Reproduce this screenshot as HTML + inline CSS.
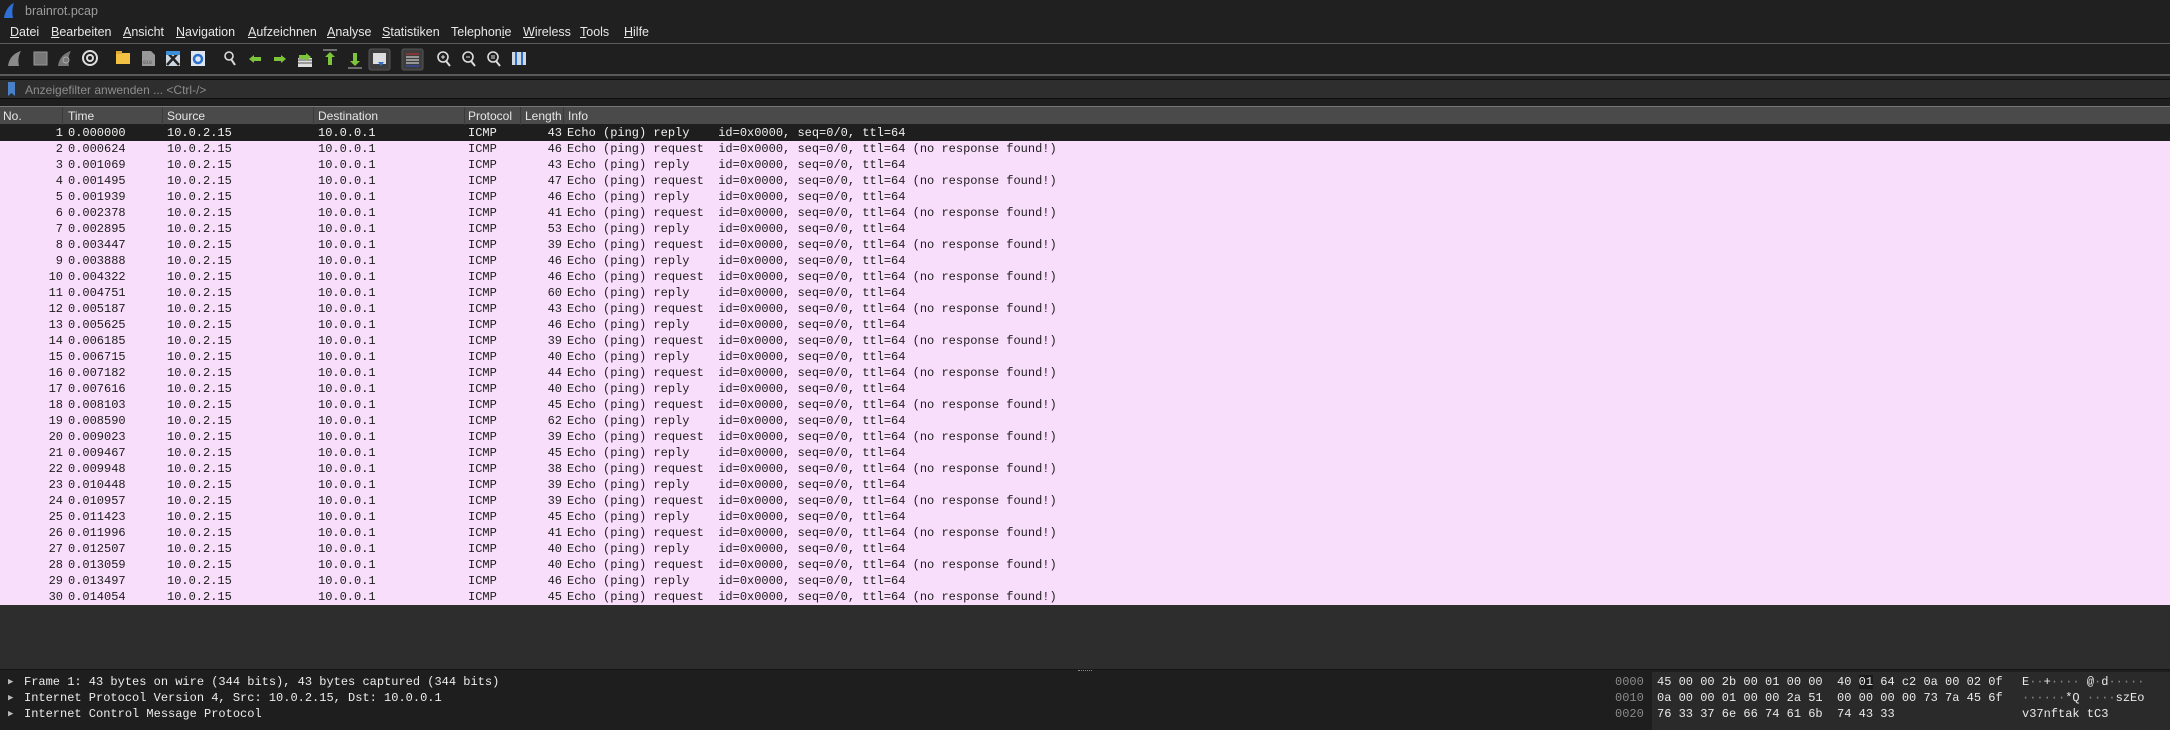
<!DOCTYPE html>
<html><head><meta charset="utf-8"><style>
*{margin:0;padding:0;box-sizing:border-box}
body{width:2170px;height:730px;background:#1e1e1e;position:relative;overflow:hidden;font-family:"Liberation Sans",sans-serif;}
.abs{position:absolute}
#title{left:0;top:0;width:2170px;height:22px;background:#202020;color:#9c9c9c;font-size:12.5px}
#menu{left:0;top:22px;width:2170px;height:22px;background:#202020;color:#e8e8e8;font-size:12.5px;border-bottom:1px solid #5e5e5e}
#menu span{position:absolute;top:3px}
#menu u{text-decoration:underline}
#tool{left:0;top:45px;width:2170px;height:31px;background:#1f1f1f;border-bottom:2px solid #5a5a5a}
#filter{left:0;top:79px;width:2170px;height:20px;background:#2e2e2e;border-top:1px solid #0e0e0e;border-bottom:1px solid #0e0e0e}
#hdr{left:0;top:106px;width:2170px;height:18px;background:#4a4a4a;color:#e6e6e6;font-size:12px;border-top:1px solid #777}
#hdr span{position:absolute;top:2px}
#hdr i{position:absolute;top:0;width:1px;height:18px;background:#3a3a3a}
.r{position:absolute;left:0;width:2170px;height:16px;background:#f9defc;color:#1c1c1c;font-family:"Liberation Mono",monospace;font-size:12px;line-height:16px;white-space:pre}
.r.s{background:#1e1e1e;color:#f0f0f0}
.r span{position:absolute;top:0}
.n{left:0;width:63px;text-align:right}
.t{left:68px}.sr{left:167px}.d{left:318px}.p{left:468px}
.l{left:520px;width:42px;text-align:right}
.i{left:567px}
#empty{left:0;top:605px;width:2170px;height:65px;background:#2d2d2d;border-bottom:1px solid #161616}
#det{left:0;top:672px;width:1604px;height:58px;background:#1e1e1e;color:#ececec;font-family:"Liberation Mono",monospace;font-size:12px;line-height:16px;white-space:pre}
#hex{left:1608px;top:672px;width:562px;height:58px;background:#2a2a2a;color:#eaeaea;font-family:"Liberation Mono",monospace;font-size:12px;line-height:16px;white-space:pre}
</style></head><body>
<div id="title" class="abs">
<svg class="abs" style="left:3px;top:2px" width="12" height="17" viewBox="0 0 12 17"><path d="M1 16 C2 9 6 3 11 1 C9 6 9 11 10 16 Z" fill="#2f6fd6"/></svg>
<span class="abs" style="left:25px;top:4px">brainrot.pcap</span></div>
<div id="menu" class="abs">
<span style="left:10px"><u>D</u>atei</span><span style="left:51px"><u>B</u>earbeiten</span><span style="left:123px"><u>A</u>nsicht</span><span style="left:176px"><u>N</u>avigation</span><span style="left:248px"><u>A</u>ufzeichnen</span><span style="left:327px"><u>A</u>nalyse</span><span style="left:382px"><u>S</u>tatistiken</span><span style="left:451px">Telephon<u>i</u>e</span><span style="left:523px"><u>W</u>ireless</span><span style="left:580px"><u>T</u>ools</span><span style="left:624px"><u>H</u>ilfe</span>
</div>
<div id="tool" class="abs">
<svg width="560" height="31" viewBox="0 0 560 31">
<path d="M8 21 C9 13 14 8 21 6 C18 11 18 16 19 21Z" fill="#8a8a8a"/>
<rect x="34" y="7" width="13" height="13" fill="#777" stroke="#999"/>
<path d="M58 21 C59 13 64 8 71 6 C68 11 68 16 69 21Z" fill="#777"/><circle cx="66" cy="15" r="3" fill="none" stroke="#aaa"/>
<circle cx="90" cy="13" r="7" fill="none" stroke="#ddd" stroke-width="2"/><circle cx="90" cy="13" r="3" fill="none" stroke="#ddd" stroke-width="2"/>
<rect x="116" y="8" width="14" height="11" fill="#f2c042"/><rect x="116" y="6" width="6" height="3" fill="#e0a830"/>
<path d="M142 6h9l4 4v11h-13z" fill="#999"/><text x="143" y="19" font-size="5" fill="#555" font-family="Liberation Mono">010</text>
<rect x="166" y="6" width="14" height="15" fill="#cfd8e0"/><path d="M167 7l12 13M179 7l-12 13" stroke="#222" stroke-width="2.5"/><rect x="166" y="6" width="14" height="4" fill="#3a8fd8"/>
<rect x="191" y="6" width="14" height="15" fill="#dde6ee"/><circle cx="198" cy="14" r="4" fill="none" stroke="#2a6fd0" stroke-width="2.5"/>
<circle cx="229" cy="11" r="4" fill="none" stroke="#ddd" stroke-width="1.6"/><path d="M231 14l4 6" stroke="#ddd" stroke-width="2"/>
<path d="M249 14l5-4v2h7v4h-7v2z" fill="#7cc43a"/>
<path d="M286 14l-5-4v2h-7v4h7v2z" fill="#7cc43a"/>
<rect x="298" y="13" width="14" height="9" fill="#ddd"/><path d="M298 15h14M298 18h14" stroke="#555"/><path d="M299 10h7v-2l5 4-5 4v-2h-7z" fill="#7cc43a"/>
<path d="M323 5h14" stroke="#bbb"/><path d="M330 7l-5 5h3v8h4v-8h3z" fill="#7cc43a"/>
<path d="M348 23h14" stroke="#bbb"/><path d="M355 21l-5-5h3v-8h4v8h3z" fill="#7cc43a"/>
<rect x="369" y="4" width="21" height="21" rx="2" fill="#3d3d3d" stroke="#555"/><rect x="373" y="8" width="13" height="11" fill="#ddd"/><path d="M378 17h6l-3 4z" fill="#2a6fd0"/>
<rect x="402" y="4" width="21" height="21" rx="2" fill="#3d3d3d" stroke="#555"/><path d="M406 9h13M406 12h13M406 15h13M406 18h13M406 21h13" stroke="#eee"/><path d="M406 9h13" stroke="#d03030"/><path d="M406 21h13" stroke="#3050d0"/>
<circle cx="443" cy="12" r="5" fill="none" stroke="#ddd" stroke-width="1.6"/><path d="M446 16l4 5" stroke="#ddd" stroke-width="2"/><path d="M441 12h4M443 10v4" stroke="#ddd"/>
<circle cx="468" cy="12" r="5" fill="none" stroke="#ddd" stroke-width="1.6"/><path d="M471 16l4 5" stroke="#ddd" stroke-width="2"/><path d="M466 12h4" stroke="#ddd"/>
<circle cx="493" cy="12" r="5" fill="none" stroke="#ddd" stroke-width="1.6"/><path d="M496 16l4 5" stroke="#ddd" stroke-width="2"/><path d="M491 11h4M491 13h4" stroke="#ddd"/>
<rect x="512" y="7" width="14" height="13" fill="#cfd8e0"/><path d="M516 7v13M522 7v13" stroke="#2a6fd0" stroke-width="2"/>
</svg></div>
<div id="filter" class="abs">
<svg class="abs" style="left:8px;top:2px" width="8" height="15"><path d="M0 0h7v14l-3.5-3-3.5 3z" fill="#4a80c8"/></svg>
<span class="abs" style="left:25px;top:3px;color:#8c8c8c;font-size:12px">Anzeigefilter anwenden ... &lt;Ctrl-/&gt;</span></div>
<div id="hdr" class="abs">
<span style="left:3px">No.</span><i style="left:62px"></i><span style="left:68px">Time</span><i style="left:162px"></i><span style="left:167px">Source</span><i style="left:313px"></i><span style="left:318px">Destination</span><i style="left:464px"></i><span style="left:468px">Protocol</span><i style="left:520px"></i><span style="left:525px">Length</span><i style="left:563px"></i><span style="left:568px">Info</span>
</div>
<div class="r s" style="top:125px"><span class="n">1</span><span class="t">0.000000</span><span class="sr">10.0.2.15</span><span class="d">10.0.0.1</span><span class="p">ICMP</span><span class="l">43</span><span class="i">Echo (ping) reply    id=0x0000, seq=0/0, ttl=64</span></div>
<div class="r" style="top:141px"><span class="n">2</span><span class="t">0.000624</span><span class="sr">10.0.2.15</span><span class="d">10.0.0.1</span><span class="p">ICMP</span><span class="l">46</span><span class="i">Echo (ping) request  id=0x0000, seq=0/0, ttl=64 (no response found!)</span></div>
<div class="r" style="top:157px"><span class="n">3</span><span class="t">0.001069</span><span class="sr">10.0.2.15</span><span class="d">10.0.0.1</span><span class="p">ICMP</span><span class="l">43</span><span class="i">Echo (ping) reply    id=0x0000, seq=0/0, ttl=64</span></div>
<div class="r" style="top:173px"><span class="n">4</span><span class="t">0.001495</span><span class="sr">10.0.2.15</span><span class="d">10.0.0.1</span><span class="p">ICMP</span><span class="l">47</span><span class="i">Echo (ping) request  id=0x0000, seq=0/0, ttl=64 (no response found!)</span></div>
<div class="r" style="top:189px"><span class="n">5</span><span class="t">0.001939</span><span class="sr">10.0.2.15</span><span class="d">10.0.0.1</span><span class="p">ICMP</span><span class="l">46</span><span class="i">Echo (ping) reply    id=0x0000, seq=0/0, ttl=64</span></div>
<div class="r" style="top:205px"><span class="n">6</span><span class="t">0.002378</span><span class="sr">10.0.2.15</span><span class="d">10.0.0.1</span><span class="p">ICMP</span><span class="l">41</span><span class="i">Echo (ping) request  id=0x0000, seq=0/0, ttl=64 (no response found!)</span></div>
<div class="r" style="top:221px"><span class="n">7</span><span class="t">0.002895</span><span class="sr">10.0.2.15</span><span class="d">10.0.0.1</span><span class="p">ICMP</span><span class="l">53</span><span class="i">Echo (ping) reply    id=0x0000, seq=0/0, ttl=64</span></div>
<div class="r" style="top:237px"><span class="n">8</span><span class="t">0.003447</span><span class="sr">10.0.2.15</span><span class="d">10.0.0.1</span><span class="p">ICMP</span><span class="l">39</span><span class="i">Echo (ping) request  id=0x0000, seq=0/0, ttl=64 (no response found!)</span></div>
<div class="r" style="top:253px"><span class="n">9</span><span class="t">0.003888</span><span class="sr">10.0.2.15</span><span class="d">10.0.0.1</span><span class="p">ICMP</span><span class="l">46</span><span class="i">Echo (ping) reply    id=0x0000, seq=0/0, ttl=64</span></div>
<div class="r" style="top:269px"><span class="n">10</span><span class="t">0.004322</span><span class="sr">10.0.2.15</span><span class="d">10.0.0.1</span><span class="p">ICMP</span><span class="l">46</span><span class="i">Echo (ping) request  id=0x0000, seq=0/0, ttl=64 (no response found!)</span></div>
<div class="r" style="top:285px"><span class="n">11</span><span class="t">0.004751</span><span class="sr">10.0.2.15</span><span class="d">10.0.0.1</span><span class="p">ICMP</span><span class="l">60</span><span class="i">Echo (ping) reply    id=0x0000, seq=0/0, ttl=64</span></div>
<div class="r" style="top:301px"><span class="n">12</span><span class="t">0.005187</span><span class="sr">10.0.2.15</span><span class="d">10.0.0.1</span><span class="p">ICMP</span><span class="l">43</span><span class="i">Echo (ping) request  id=0x0000, seq=0/0, ttl=64 (no response found!)</span></div>
<div class="r" style="top:317px"><span class="n">13</span><span class="t">0.005625</span><span class="sr">10.0.2.15</span><span class="d">10.0.0.1</span><span class="p">ICMP</span><span class="l">46</span><span class="i">Echo (ping) reply    id=0x0000, seq=0/0, ttl=64</span></div>
<div class="r" style="top:333px"><span class="n">14</span><span class="t">0.006185</span><span class="sr">10.0.2.15</span><span class="d">10.0.0.1</span><span class="p">ICMP</span><span class="l">39</span><span class="i">Echo (ping) request  id=0x0000, seq=0/0, ttl=64 (no response found!)</span></div>
<div class="r" style="top:349px"><span class="n">15</span><span class="t">0.006715</span><span class="sr">10.0.2.15</span><span class="d">10.0.0.1</span><span class="p">ICMP</span><span class="l">40</span><span class="i">Echo (ping) reply    id=0x0000, seq=0/0, ttl=64</span></div>
<div class="r" style="top:365px"><span class="n">16</span><span class="t">0.007182</span><span class="sr">10.0.2.15</span><span class="d">10.0.0.1</span><span class="p">ICMP</span><span class="l">44</span><span class="i">Echo (ping) request  id=0x0000, seq=0/0, ttl=64 (no response found!)</span></div>
<div class="r" style="top:381px"><span class="n">17</span><span class="t">0.007616</span><span class="sr">10.0.2.15</span><span class="d">10.0.0.1</span><span class="p">ICMP</span><span class="l">40</span><span class="i">Echo (ping) reply    id=0x0000, seq=0/0, ttl=64</span></div>
<div class="r" style="top:397px"><span class="n">18</span><span class="t">0.008103</span><span class="sr">10.0.2.15</span><span class="d">10.0.0.1</span><span class="p">ICMP</span><span class="l">45</span><span class="i">Echo (ping) request  id=0x0000, seq=0/0, ttl=64 (no response found!)</span></div>
<div class="r" style="top:413px"><span class="n">19</span><span class="t">0.008590</span><span class="sr">10.0.2.15</span><span class="d">10.0.0.1</span><span class="p">ICMP</span><span class="l">62</span><span class="i">Echo (ping) reply    id=0x0000, seq=0/0, ttl=64</span></div>
<div class="r" style="top:429px"><span class="n">20</span><span class="t">0.009023</span><span class="sr">10.0.2.15</span><span class="d">10.0.0.1</span><span class="p">ICMP</span><span class="l">39</span><span class="i">Echo (ping) request  id=0x0000, seq=0/0, ttl=64 (no response found!)</span></div>
<div class="r" style="top:445px"><span class="n">21</span><span class="t">0.009467</span><span class="sr">10.0.2.15</span><span class="d">10.0.0.1</span><span class="p">ICMP</span><span class="l">45</span><span class="i">Echo (ping) reply    id=0x0000, seq=0/0, ttl=64</span></div>
<div class="r" style="top:461px"><span class="n">22</span><span class="t">0.009948</span><span class="sr">10.0.2.15</span><span class="d">10.0.0.1</span><span class="p">ICMP</span><span class="l">38</span><span class="i">Echo (ping) request  id=0x0000, seq=0/0, ttl=64 (no response found!)</span></div>
<div class="r" style="top:477px"><span class="n">23</span><span class="t">0.010448</span><span class="sr">10.0.2.15</span><span class="d">10.0.0.1</span><span class="p">ICMP</span><span class="l">39</span><span class="i">Echo (ping) reply    id=0x0000, seq=0/0, ttl=64</span></div>
<div class="r" style="top:493px"><span class="n">24</span><span class="t">0.010957</span><span class="sr">10.0.2.15</span><span class="d">10.0.0.1</span><span class="p">ICMP</span><span class="l">39</span><span class="i">Echo (ping) request  id=0x0000, seq=0/0, ttl=64 (no response found!)</span></div>
<div class="r" style="top:509px"><span class="n">25</span><span class="t">0.011423</span><span class="sr">10.0.2.15</span><span class="d">10.0.0.1</span><span class="p">ICMP</span><span class="l">45</span><span class="i">Echo (ping) reply    id=0x0000, seq=0/0, ttl=64</span></div>
<div class="r" style="top:525px"><span class="n">26</span><span class="t">0.011996</span><span class="sr">10.0.2.15</span><span class="d">10.0.0.1</span><span class="p">ICMP</span><span class="l">41</span><span class="i">Echo (ping) request  id=0x0000, seq=0/0, ttl=64 (no response found!)</span></div>
<div class="r" style="top:541px"><span class="n">27</span><span class="t">0.012507</span><span class="sr">10.0.2.15</span><span class="d">10.0.0.1</span><span class="p">ICMP</span><span class="l">40</span><span class="i">Echo (ping) reply    id=0x0000, seq=0/0, ttl=64</span></div>
<div class="r" style="top:557px"><span class="n">28</span><span class="t">0.013059</span><span class="sr">10.0.2.15</span><span class="d">10.0.0.1</span><span class="p">ICMP</span><span class="l">40</span><span class="i">Echo (ping) request  id=0x0000, seq=0/0, ttl=64 (no response found!)</span></div>
<div class="r" style="top:573px"><span class="n">29</span><span class="t">0.013497</span><span class="sr">10.0.2.15</span><span class="d">10.0.0.1</span><span class="p">ICMP</span><span class="l">46</span><span class="i">Echo (ping) reply    id=0x0000, seq=0/0, ttl=64</span></div>
<div class="r" style="top:589px"><span class="n">30</span><span class="t">0.014054</span><span class="sr">10.0.2.15</span><span class="d">10.0.0.1</span><span class="p">ICMP</span><span class="l">45</span><span class="i">Echo (ping) request  id=0x0000, seq=0/0, ttl=64 (no response found!)</span></div>
<div id="empty" class="abs"></div>
<div class="abs" style="left:1078px;top:670px;width:14px;height:2px;border-top:1px dotted #888"></div>
<div id="det" class="abs"><div style="position:absolute;left:0;top:2px;width:1604px;height:48px;background:#1e1e1e"></div>
<div style="position:absolute;left:8px;top:2px;color:#bbb;font-size:9px;line-height:16px">&#9654;<br>&#9654;<br>&#9654;</div>
<div style="position:absolute;left:24px;top:2px">Frame 1: 43 bytes on wire (344 bits), 43 bytes captured (344 bits)
Internet Protocol Version 4, Src: 10.0.2.15, Dst: 10.0.0.1
Internet Control Message Protocol</div></div>
<div id="hex" class="abs"><div style="position:absolute;left:0;top:0;width:44px;height:58px;background:#1e1e1e"></div>
<div style="position:absolute;left:7px;top:2px;color:#8a8a8a">0000
0010
0020</div>
<div style="position:absolute;left:49px;top:2px">45 00 00 2b 00 01 00 00  40 <span style="background:#1a1a1a">01</span> 64 c2 0a 00 02 0f
0a 00 00 01 00 00 2a 51  00 00 00 00 73 7a 45 6f
76 33 37 6e 66 74 61 6b  74 43 33</div>
<div style="position:absolute;left:414px;top:2px">E<span style="color:#888">··</span>+<span style="color:#888">····</span> @<span style="color:#888">·</span>d<span style="color:#888">·····</span>
<span style="color:#888">······</span>*Q <span style="color:#888">····</span>szEo
v37nftak tC3</div></div>
</body></html>
